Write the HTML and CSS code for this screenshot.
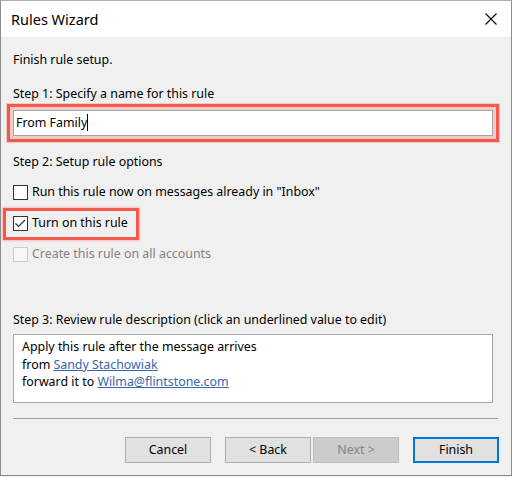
FILE: index.html
```html
<!DOCTYPE html>
<html>
<head>
<meta charset="utf-8">
<title>Rules Wizard</title>
<link rel="stylesheet" href="styles.css">
</head>
<body>
<div class="window">
  <div class="titlebar">
    <span class="title">Rules Wizard</span>
    <svg class="close" width="12" height="12" viewBox="0 0 12 12"><path d="M0.5 0.5 L11.5 11.5 M11.5 0.5 L0.5 11.5" stroke="#000" stroke-width="1.1" fill="none"/></svg>
  </div>
  <div class="body">
    <div class="line intro">Finish rule setup.</div>
    <div class="line step1">Step 1: Specify a name for this rule</div>
    <div class="input"><span class="caret">From Family</span></div>
    <div class="line step2">Step 2: Setup rule options</div>
    <div class="row row1"><span class="box"></span><span>Run this rule now on messages already in "Inbox"</span></div>
    <div class="row row2"><span class="hl"><span class="box"><svg width="15" height="15" viewBox="0 0 15 15"><path d="M2.5 7.5 L5.5 10.5 L12 4" stroke="#333" stroke-width="1.2" fill="none"/></svg></span><span>Turn on this rule</span></span></div>
    <div class="row row3 disabled"><span class="box"></span><span>Create this rule on all accounts</span></div>
    <div class="line step3">Step 3: Review rule description (click an underlined value to edit)</div>
    <div class="desc">
      <div>Apply this rule after the message arrives</div>
      <div>from <a class="link">Sandy Stachowiak</a></div>
      <div>forward it to <a class="link">Wilma@flintstone.com</a></div>
    </div>
    <div class="sep"></div>
    <div class="buttons">
      <div class="btn">Cancel</div>
      <div class="btn back">&lt; Back</div>
      <div class="btn next">Next &gt;</div>
      <div class="btn finish">Finish</div>
    </div>
  </div>
</div>
</body>
</html>
```
FILE: styles.css
```css
html, body {
  margin: 0;
  padding: 0;
  background: #f0f0f0;
}
.window {
  width: 512px;
  height: 476px;
  box-sizing: border-box;
  border: 1px solid #8c8c8c;
  border-top-color: #b0b0b0;
  background: #f0f0f0;
  display: flex;
  flex-direction: column;
  font-family: "Noto Sans", "Open Sans", sans-serif;
  font-size: 12.4px;
  color: #000;
}
.titlebar {
  height: 36px;
  background: #fff;
  display: flex;
  align-items: center;
  justify-content: space-between;
  padding: 0 14px 0 10px;
  flex: none;
}
.title {
  font-size: 14.5px;
  line-height: 20px;
}
.close { display: block; }
.body {
  padding: 0 12px;
  display: flex;
  flex-direction: column;
}
.line {
  line-height: 16px;
  white-space: nowrap;
}
.intro { margin-top: 15px; }
.step1 { margin-top: 18px; }
.input {
  margin-top: 8px;
  margin-right: 6px;
  height: 26px;
  box-sizing: border-box;
  border: 1px solid #a5a5a5;
  background: #fff;
  padding: 4px 2px 0;
  line-height: 16px;
  outline: 3px solid #f35a4c;
  outline-offset: 3px;
  box-shadow: 0 0 0 7px rgba(243, 90, 76, 0.25);
}
.caret { border-right: 1px solid #000; }
.step2 { margin-top: 18px; }
.row {
  display: flex;
  align-items: center;
  height: 16px;
  line-height: 16px;
  white-space: nowrap;
}
.row > .box, .hl > .box {
  width: 15px;
  height: 15px;
  box-sizing: border-box;
  border: 1px solid #333;
  background: #fff;
  margin-right: 4px;
  flex: none;
  position: relative;
}
.box svg { position: absolute; left: -1px; top: -1px; }
.row1 { margin-top: 14px; }
.row2 { margin-top: 15px; }
.hl {
  display: flex;
  align-items: center;
  border: 3px solid #f35a4c;
  padding: 4px 8px 6px 7px;
  margin: -7px -11px -9px -10px;
  box-shadow: 0 0 2px 1px rgba(243, 90, 76, 0.35);
}
.row3 { margin-top: 15px; }
.disabled { color: #838383; }
.disabled .box { border-color: #cccccc; background: #f7f7f7; }
.step3 { margin-top: 50px; }
.desc {
  margin-top: 6px;
  margin-right: 6px;
  height: 69px;
  box-sizing: border-box;
  border: 1px solid #a5a5a5;
  background: #fff;
  padding: 3px 8px 0;
  line-height: 17.5px;
  white-space: nowrap;
}
.link {
  color: #3a66ad;
  text-decoration: underline;
}
.sep {
  margin-top: 15px;
  height: 1px;
  background: #a0a0a0;
  margin-right: 1px;
}
.buttons {
  margin-top: 18px;
  display: flex;
  justify-content: flex-end;
}
.btn {
  width: 86px;
  height: 26px;
  box-sizing: border-box;
  border: 1px solid #adadad;
  background: #e1e1e1;
  text-align: center;
  line-height: 24px;
  margin-left: 14px;
}
.next {
  margin-left: 2px;
  background: #cccccc;
  border-color: #bfbfbf;
  color: #838383;
}
.finish {
  border: 2px solid #0078d7;
  line-height: 22px;
}
```
